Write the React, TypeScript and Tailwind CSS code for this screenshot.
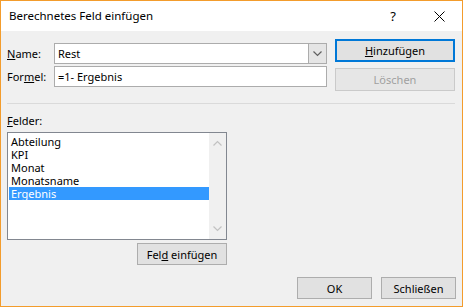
import React from 'react';

const font = { fontFamily: '"Noto Sans", "Liberation Sans", sans-serif' };

const items = ['Abteilung', 'KPI', 'Monat', 'Monatsname', 'Ergebnis'];

const Chevron = ({ up, className }: { up?: boolean; className?: string }) => (
  <svg width="9" height="6" viewBox="0 0 9 6" className={className}>
    <path
      d={up ? 'M0.5 5.5 L4.5 1.5 L8.5 5.5' : 'M0.5 0.5 L4.5 4.5 L8.5 0.5'}
      fill="none"
      stroke="currentColor"
      strokeWidth="1.2"
    />
  </svg>
);

export default function App() {
  return (
    <div
      className="w-[463px] h-[307px] border border-[#f39c2c] flex flex-col text-[11px] text-black leading-none overflow-hidden"
      style={font}
    >
      {/* Title bar */}
      <div className="h-[30px] bg-white flex items-center shrink-0">
        <span className="pl-[8px] text-[11.5px]">Berechnetes Feld einfügen</span>
        <span className="ml-auto mr-[38px] text-[13px]">?</span>
        <svg width="11" height="11" viewBox="0 0 11 11" className="mr-[17px]">
          <path d="M0.5 0.5 L10.5 10.5 M10.5 0.5 L0.5 10.5" stroke="#000" strokeWidth="1" />
        </svg>
      </div>

      {/* Body */}
      <div className="flex-1 bg-[#f0f0f0] flex flex-col pl-[6px]">
        {/* Name / Formel + buttons */}
        <div className="flex">
          <div className="w-[320px] pt-[12px] flex flex-col gap-[2px]">
            <div className="flex items-center h-[21px]">
              <span className="w-[47px]"><u>N</u>ame:</span>
              <div className="flex-1 h-[21px] bg-white border border-[#acacac] flex items-center">
                <span className="pl-[3px]">Rest</span>
                <div className="ml-auto w-[18px] h-[19px] bg-[#e5e5e5] border-l border-[#acacac] flex items-center justify-center text-[#606060]">
                  <Chevron />
                </div>
              </div>
            </div>
            <div className="flex items-center h-[21px]">
              <span className="w-[47px]">For<u>m</u>el:</span>
              <div className="flex-1 h-[21px] bg-white border border-[#acacac] flex items-center">
                <span className="pl-[3px]">=1- Ergebnis</span>
              </div>
            </div>
          </div>
          <div className="ml-[8px] w-[120px] pt-[8px] flex flex-col gap-[6px]">
            <button className="h-[23px] bg-[#e1e1e1] border-2 border-[#0078d7] flex items-center justify-center">
              <span><u>H</u>inzufügen</span>
            </button>
            <button className="h-[23px] bg-[#e6e6e6] border border-[#cacaca] text-[#a0a0a0] flex items-center justify-center">
              Löschen
            </button>
          </div>
        </div>

        {/* Separator */}
        <div className="mt-[12px] mr-[7px] h-px bg-[#dadada]" />

        {/* Felder */}
        <div className="mt-[11px] h-[14px]"><u>F</u>elder:</div>
        <div className="mt-[3px] w-[220px] h-[108px] bg-white border border-[#828790] flex">
          <div className="flex-1 pt-[2px] pl-px flex flex-col">
            {items.map((it) => (
              <div
                key={it}
                className={`h-[13px] pl-[2px] flex items-center ${it === 'Ergebnis' ? 'bg-[#3399ff] text-white' : ''}`}
              >
                {it}
              </div>
            ))}
          </div>
          <div className="w-[17px] bg-[#f0f0f0] flex flex-col items-center justify-between py-[7px] text-[#c2c2c2]">
            <Chevron up />
            <Chevron />
          </div>
        </div>
        <div className="flex w-[220px] justify-end mt-[3px]">
          <button className="w-[90px] h-[22px] bg-[#e1e1e1] border border-[#adadad] flex items-center justify-center">
            <span>Fel<u>d</u> einfügen</span>
          </button>
        </div>

        {/* Bottom buttons */}
        <div className="mt-[12px] flex justify-end gap-[9px] pr-[6px]">
          <button className="w-[75px] h-[22px] bg-[#e1e1e1] border border-[#adadad] flex items-center justify-center">
            OK
          </button>
          <button className="w-[75px] h-[22px] bg-[#e1e1e1] border border-[#adadad] flex items-center justify-center">
            Schließen
          </button>
        </div>
      </div>
    </div>
  );
}
